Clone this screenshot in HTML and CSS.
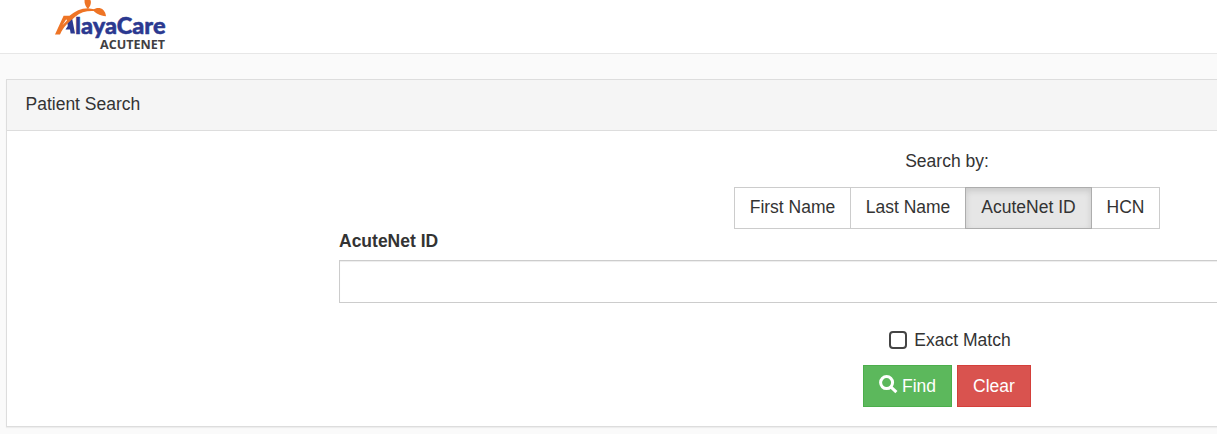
FILE: index.html
```html
<!DOCTYPE html>
<html lang="en">
<head>
<meta charset="utf-8">
<title>Patient Search</title>
<link rel="stylesheet" href="styles.css">
</head>
<body>
<header class="navbar">
  <svg class="logo" width="120" height="53" viewBox="50 0 120 53" role="img" aria-label="AlayaCare AcuteNet">
    <path class="logo-blue" d="M67.3 22.5 L72 17.8 L75 33.6 L70.6 33.6 L70 29.5 L65.5 29.5 L67.8 26 Z"/>
    <text class="logo-name" x="75" y="33.5" textLength="90.5" lengthAdjust="spacingAndGlyphs">layaCare</text>
    <path class="logo-orange" d="M55 34.5 L63.6 15.8 L69.5 15.8 C75 11.3 81 8.4 88 8.3 L97 9.8 L97 11.3 C88 10.3 81 11.8 75.5 16.5 C69.5 21.5 63 27 60 34.5 Z"/>
    <path class="logo-hole" d="M66.2 19.2 L67 20.6 L62.6 25 Z"/>
    <path class="logo-orange" d="M93 10 C98 6.2 105 8 106 16.2 C100 15.5 96 14 93 10 Z"/>
    <path class="logo-orange" d="M84.5 0 C84.2 4 86 7 87.8 9 C91 5.5 91.4 2 90.4 0 Z"/>
    <text class="logo-sub" x="100" y="49" textLength="65" lengthAdjust="spacingAndGlyphs">ACUTENET</text>
  </svg>
</header>
<main class="page">
  <section class="panel">
    <div class="panel-heading">Patient Search</div>
    <div class="panel-body">
      <form class="search">
        <div class="search-by">Search by:</div>
        <div class="btn-group">
          <button type="button" class="btn first-name">First Name</button>
          <button type="button" class="btn last-name">Last Name</button>
          <button type="button" class="btn active">AcuteNet ID</button>
          <button type="button" class="btn hcn">HCN</button>
        </div>
        <label class="field-label" for="acute-id">AcuteNet ID</label>
        <input class="field" id="acute-id" type="text">
        <label class="exact"><input class="check" type="checkbox">Exact Match</label>
        <div class="actions">
          <button type="button" class="btn find"><svg class="icon" width="19" height="19" viewBox="0 0 19 19"><circle cx="7.6" cy="7.6" r="6"/><path d="M11.8 11.8 L17.4 17.2"/></svg>Find</button>
          <button type="button" class="btn clear">Clear</button>
        </div>
      </form>
    </div>
  </section>
</main>
</body>
</html>
```
FILE: styles.css
```css
* { box-sizing: border-box; }
body {
  margin: 0;
  background: #fafafa;
  color: #333;
  font: 17.5px/25px "Liberation Sans", Arial, sans-serif;
}
.navbar { height: 54px; background: #fff; border-bottom: 1px solid #e7e7e7; padding-left: 50px; }
.logo { display: block; }
.logo-blue { fill: #2b3990; }
.logo-orange { fill: #ee7425; }
.logo-hole { fill: #fff; }
.logo-name { fill: #2b3990; stroke: #2b3990; stroke-width: .5px; font: 900 23.5px Lato, sans-serif; }
.logo-sub { fill: #414042; font: 700 12.5px "Open Sans", sans-serif; }
.page { height: 380px; padding: 25px 0 0 6px; overflow: hidden; }
.panel {
  width: 1882px;
  height: 348px;
  background: #fff;
  border: 1px solid #ddd;
  box-shadow: 0 1px 1px rgba(0, 0, 0, .05);
}
.panel-heading { height: 51px; padding: 12px 18.5px; background: #f5f5f5; border-bottom: 1px solid #ddd; }
.panel-body { padding-top: 18px; }
.search { display: flex; flex-direction: column; align-items: center; width: 1216px; margin: 0 auto; }
.btn-group { display: flex; margin-top: 13px; }
.btn {
  height: 42px;
  margin: 0;
  padding: 0 0 1px;
  border: 1px solid #ccc;
  border-radius: 0;
  background: #fff;
  color: #333;
  font: inherit;
}
.btn-group .btn + .btn { margin-left: -1px; }
.first-name { width: 117px; }
.last-name { width: 116px; }
.hcn { width: 69px; }
.btn.active {
  position: relative;
  width: 127px;
  background: #e6e6e6;
  border-color: #adadad;
  box-shadow: inset 0 3px 6px rgba(0, 0, 0, .125);
}
.field-label { align-self: flex-start; font-weight: 700; }
.field {
  width: 100%;
  height: 43px;
  margin: 6px 0 25px;
  border: 1px solid #ccc;
  background: #fff;
  box-shadow: inset 0 1px 1px rgba(0, 0, 0, .075);
}
.exact { display: flex; align-items: center; gap: 7px; margin-left: 6px; }
.check {
  appearance: none;
  width: 18px;
  height: 18px;
  margin: 0 0 1px;
  border: 2px solid #444;
  border-radius: 4px;
  background: #fff;
}
.actions { display: flex; gap: 5px; margin-top: 12px; }
.actions .btn { padding: 1px 0 0; }
.find { display: flex; justify-content: center; align-items: center; gap: 4px; width: 89px; color: #fff; background: #5cb85c; border-color: #4cae4c; }
.clear { width: 74px; color: #fff; background: #d9534f; border-color: #d43f3a; }
.icon { fill: none; stroke: #fff; stroke-width: 3; margin-top: -4px; }
```
